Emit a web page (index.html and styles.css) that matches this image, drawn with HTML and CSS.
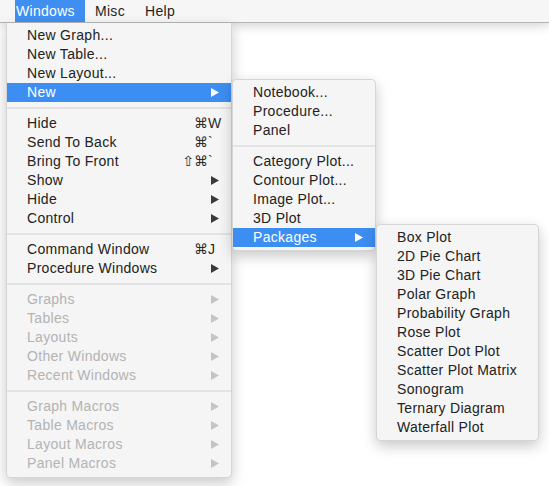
FILE: index.html
```html
<!DOCTYPE html>
<html>
<head>
<meta charset="utf-8">
<link rel="stylesheet" href="styles.css">
</head>
<body>
<div class="menubar">
  <div class="bar-item bar-active">Windows</div>
  <div class="bar-item">Misc</div>
  <div class="bar-item">Help</div>
</div>

<div class="desk">
  <div class="menu menu-main">
    <div class="row"><span class="label">New Graph...</span></div>
    <div class="row"><span class="label">New Table...</span></div>
    <div class="row"><span class="label">New Layout...</span></div>
    <div class="row sel"><span class="label">New</span><span class="key"><svg class="arrow" viewBox="0 0 8 9"><polygon points="0,0 8,4.5 0,9"/></svg></span></div>
    <div class="sep"></div>
    <div class="row"><span class="label">Hide</span><span class="mods">⌘</span><span class="key">W</span></div>
    <div class="row"><span class="label">Send To Back</span><span class="mods">⌘</span><span class="key">`</span></div>
    <div class="row"><span class="label">Bring To Front</span><span class="mods">⇧⌘</span><span class="key">`</span></div>
    <div class="row"><span class="label">Show</span><span class="key"><svg class="arrow" viewBox="0 0 8 9"><polygon points="0,0 8,4.5 0,9"/></svg></span></div>
    <div class="row"><span class="label">Hide</span><span class="key"><svg class="arrow" viewBox="0 0 8 9"><polygon points="0,0 8,4.5 0,9"/></svg></span></div>
    <div class="row"><span class="label">Control</span><span class="key"><svg class="arrow" viewBox="0 0 8 9"><polygon points="0,0 8,4.5 0,9"/></svg></span></div>
    <div class="sep"></div>
    <div class="row"><span class="label">Command Window</span><span class="mods">⌘</span><span class="key">J</span></div>
    <div class="row"><span class="label">Procedure Windows</span><span class="key"><svg class="arrow" viewBox="0 0 8 9"><polygon points="0,0 8,4.5 0,9"/></svg></span></div>
    <div class="sep"></div>
    <div class="row off"><span class="label">Graphs</span><span class="key"><svg class="arrow" viewBox="0 0 8 9"><polygon points="0,0 8,4.5 0,9"/></svg></span></div>
    <div class="row off"><span class="label">Tables</span><span class="key"><svg class="arrow" viewBox="0 0 8 9"><polygon points="0,0 8,4.5 0,9"/></svg></span></div>
    <div class="row off"><span class="label">Layouts</span><span class="key"><svg class="arrow" viewBox="0 0 8 9"><polygon points="0,0 8,4.5 0,9"/></svg></span></div>
    <div class="row off"><span class="label">Other Windows</span><span class="key"><svg class="arrow" viewBox="0 0 8 9"><polygon points="0,0 8,4.5 0,9"/></svg></span></div>
    <div class="row off"><span class="label">Recent Windows</span><span class="key"><svg class="arrow" viewBox="0 0 8 9"><polygon points="0,0 8,4.5 0,9"/></svg></span></div>
    <div class="sep"></div>
    <div class="row off"><span class="label">Graph Macros</span><span class="key"><svg class="arrow" viewBox="0 0 8 9"><polygon points="0,0 8,4.5 0,9"/></svg></span></div>
    <div class="row off"><span class="label">Table Macros</span><span class="key"><svg class="arrow" viewBox="0 0 8 9"><polygon points="0,0 8,4.5 0,9"/></svg></span></div>
    <div class="row off"><span class="label">Layout Macros</span><span class="key"><svg class="arrow" viewBox="0 0 8 9"><polygon points="0,0 8,4.5 0,9"/></svg></span></div>
    <div class="row off"><span class="label">Panel Macros</span><span class="key"><svg class="arrow" viewBox="0 0 8 9"><polygon points="0,0 8,4.5 0,9"/></svg></span></div>
  </div>

  <div class="menu menu-new">
    <div class="row"><span class="label">Notebook...</span></div>
    <div class="row"><span class="label">Procedure...</span></div>
    <div class="row"><span class="label">Panel</span></div>
    <div class="sep"></div>
    <div class="row"><span class="label">Category Plot...</span></div>
    <div class="row"><span class="label">Contour Plot...</span></div>
    <div class="row"><span class="label">Image Plot...</span></div>
    <div class="row"><span class="label">3D Plot</span></div>
    <div class="row sel"><span class="label">Packages</span><span class="key"><svg class="arrow" viewBox="0 0 8 9"><polygon points="0,0 8,4.5 0,9"/></svg></span></div>
  </div>

  <div class="menu menu-pkg">
    <div class="row"><span class="label">Box Plot</span></div>
    <div class="row"><span class="label">2D Pie Chart</span></div>
    <div class="row"><span class="label">3D Pie Chart</span></div>
    <div class="row"><span class="label">Polar Graph</span></div>
    <div class="row"><span class="label">Probability Graph</span></div>
    <div class="row"><span class="label">Rose Plot</span></div>
    <div class="row"><span class="label">Scatter Dot Plot</span></div>
    <div class="row"><span class="label">Scatter Plot Matrix</span></div>
    <div class="row"><span class="label">Sonogram</span></div>
    <div class="row"><span class="label">Ternary Diagram</span></div>
    <div class="row"><span class="label">Waterfall Plot</span></div>
  </div>
</div>
</body>
</html>
```

FILE: styles.css
```css
html, body {
  margin: 0;
  padding: 0;
  background: #ffffff;
}

body {
  width: 549px;
  height: 486px;
  overflow: hidden;
  font-family: "Liberation Sans", Arial, sans-serif;
  font-size: 14px;
  letter-spacing: 0.3px;
  color: #222222;
  position: relative;
}

.menubar {
  display: flex;
  height: 22px;
  background: #f6f6f6;
  border-bottom: 1px solid #b6b6b6;
  box-shadow: 0 2px 12px rgba(0, 0, 0, 0.2);
  position: relative;
  z-index: 1;
}

.bar-item {
  line-height: 22px;
  padding: 0 10px;
  color: #1e1e1e;
}

.bar-active {
  margin-left: 15px;
  width: 69px;
  padding: 0 0 0 1px;
  background: #3f8ff2;
  color: #ffffff;
}

.desk {
  position: relative;
}

.menu {
  position: absolute;
  z-index: 2;
  box-sizing: border-box;
  background: #f5f5f5;
  border: 1px solid rgba(0, 0, 0, 0.13);
  border-radius: 5px;
  padding: 3px 0;
  box-shadow: 0 5px 14px rgba(0, 0, 0, 0.22);
}

.menu-main {
  left: 6px;
  top: 0;
  width: 226px;
  border-top: none;
  border-radius: 0 0 5px 5px;
  padding-top: 3px;
  padding-bottom: 4px;
}

.menu-new {
  left: 232px;
  top: 56px;
  width: 144px;
}

.menu-pkg {
  left: 376px;
  top: 201px;
  width: 163px;
}

.row {
  display: flex;
  align-items: center;
  height: 19px;
  line-height: 19px;
  padding-left: 20px;
  white-space: nowrap;
}

.label {
  flex: 1;
}

.mods {
  font-family: "DejaVu Sans", sans-serif;
  font-size: 14px;
  letter-spacing: 0;
  color: #2a2a2a;
}

.key {
  width: 23px;
  display: flex;
  align-items: center;
  color: #2a2a2a;
}

.arrow {
  width: 8px;
  height: 9px;
  margin-left: 3px;
  fill: #3a3a3a;
}

.sel {
  background: #3d8ef3;
  color: #ffffff;
}

.sel .arrow {
  fill: #ffffff;
}

.off {
  color: #b3b3b3;
}

.off .arrow {
  fill: #c4c4c4;
}

.sep {
  height: 2px;
  background: #e3e3e3;
  margin: 5px 0;
}
```
